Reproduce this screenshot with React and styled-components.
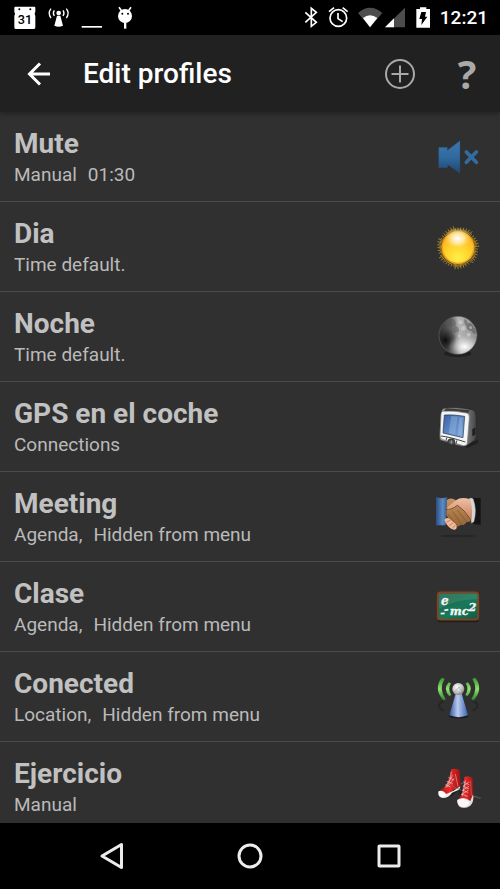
import React from 'react'
import styled, { createGlobalStyle } from 'styled-components';

const profiles = [
  { name: 'Mute', details: ['Manual', '01:30'], Icon: MuteIcon },
  { name: 'Dia', details: ['Time default.'], Icon: SunIcon },
  { name: 'Noche', details: ['Time default.'], Icon: MoonIcon },
  { name: 'GPS en el coche', details: ['Connections'], Icon: GpsIcon },
  { name: 'Meeting', details: ['Agenda,', 'Hidden from menu'], Icon: MeetingIcon },
  { name: 'Clase', details: ['Agenda,', 'Hidden from menu'], Icon: BoardIcon },
  { name: 'Conected', details: ['Location,', 'Hidden from menu'], Icon: AntennaIcon },
  { name: 'Ejercicio', details: ['Manual'], Icon: ShoesIcon },
];

function App() {
  return (
    <Screen>
      <GlobalStyle />
      <StatusBar />
      <AppBar>
        <BackButton aria-label="Back">
          <svg width="24" height="24" viewBox="0 0 24 24" fill="none" stroke="#fff" strokeWidth="3">
            <path d="M23 12H3M13 1.500L2.500 12L13 22.500" />
          </svg>
        </BackButton>
        <Title>Edit profiles</Title>
        <AddButton aria-label="Add profile">
          <svg width="32" height="32" viewBox="0 0 32 32" fill="none" stroke="#a9a9a9" strokeWidth="2">
            <circle cx="16" cy="16" r="14" />
            <path d="M16 7.500V24.500M7.500 16H24.500" />
          </svg>
        </AddButton>
        <HelpButton aria-label="Help">?</HelpButton>
      </AppBar>
      <List>
        {profiles.map(({ name, details, Icon }) =>
          <Item key={name}>
            <Row>
              <Labels>
                <Name>{name}</Name>
                <Details>
                  {details.map(text => <span key={text}>{text}</span>)}
                </Details>
              </Labels>
              <Icon />
            </Row>
          </Item>
        )}
      </List>
      <NavBar>
        <NavButton aria-label="Back">
          <svg width="26" height="28" viewBox="0 0 26 28">
            <path d="M23.500 2.500V25.500L4 14Z" />
          </svg>
        </NavButton>
        <NavButton aria-label="Home">
          <svg width="26" height="28" viewBox="0 0 26 28">
            <circle cx="13" cy="14" r="11" />
          </svg>
        </NavButton>
        <NavButton aria-label="Recent apps">
          <svg width="26" height="28" viewBox="0 0 26 28">
            <rect x="3" y="4" width="20" height="20" rx="0.500" />
          </svg>
        </NavButton>
      </NavBar>
    </Screen>
  )
}

function StatusBar() {
  return (
    <Status>
      <Notifications>
        <svg width="22" height="35" viewBox="42 0 66 105">
          <path d="M46 20h57q3 0 3 4v11q-4 6 0 12v35q0 5-4 5H47q-4 0-4-5V47q4-6 0-12V24q0-4 3-4z" />
          <circle cx="58" cy="28" r="3" fill="#000" />
          <circle cx="91" cy="28" r="3" fill="#000" />
          <CalendarDay x="75" y="73" textAnchor="middle">31</CalendarDay>
        </svg>
        <svg width="21" height="35" viewBox="144 0 63 105">
          <circle cx="176" cy="39" r="7" />
          <path d="M171 47h10l8 30q-13 6-26 0z" />
          <path d="M163 31q-6 8 0 17M189 31q6 8 0 17M153 26q-11 14 0 28M199 26q11 14 0 28" fill="none" stroke="#fff" strokeWidth="4" />
        </svg>
        <svg width="22" height="35" viewBox="243 0 66 105">
          <path d="M245 78h61v5h-61z" />
        </svg>
        <svg width="20" height="35" viewBox="345 0 60 105">
          <circle cx="375" cy="48" r="21" />
          <path d="M357 22l8 11M393 22l-8 11" stroke="#fff" strokeWidth="5" />
          <path d="M372 67h7v19h-7z" />
          <circle cx="367" cy="41" r="3" fill="#000" />
          <circle cx="384" cy="41" r="3" fill="#000" />
        </svg>
      </Notifications>
      <Indicators>
        <svg width="14" height="35" viewBox="162 0 42 105">
          <path d="M166 37l33 30l-15 12V25l15 12l-33 30" fill="none" stroke="#fff" strokeWidth="5" />
        </svg>
        <svg width="21" height="35" viewBox="231 0 63 105">
          <g fill="none" stroke="#fff" strokeWidth="5">
            <circle cx="265" cy="54" r="25" />
            <path d="M264 39v17l14 9M237 35l15-12M293 35l-15-12" />
          </g>
        </svg>
        <Network>
          <svg width="26" height="35" viewBox="321 0 78 105">
            <path d="M324 39q36-31 73 0l-37 43z" fill="#4d4d4d" />
            <path d="M339 54q21-17 43 0l-22 28z" />
          </svg>
          <svg width="22" height="35" viewBox="402 0 66 105">
            <path d="M405 82L465 23V82z" fill="#4d4d4d" />
            <path d="M405 82L432 55V82z" />
          </svg>
        </Network>
        <svg width="16" height="35" viewBox="495 0 48 105">
          <path d="M499 27h11v-5h19v5h11v56h-41z" />
          <path d="M514 36h14l-3 14h7L514 75l2-18h-8z" fill="#000" />
        </svg>
        <Clock>12:21</Clock>
      </Indicators>
    </Status>
  )
}

function MuteIcon() {
  return (
    <ProfileIcon viewBox="27 8 144 144">
      <defs>
        <linearGradient id="mute" x1="0" y1="0" x2="0" y2="1">
          <stop offset="0" stopColor="#3a78ad" />
          <stop offset="0.500" stopColor="#316aa0" />
          <stop offset="1" stopColor="#204670" />
        </linearGradient>
      </defs>
      <path d="M41 51h26v9l38-29v98L68 103v9H41z" fill="url(#mute)" stroke="#244c72" strokeWidth="1" />
      <path d="M124 65l30 31M154 65l-30 31" stroke="#336ca0" strokeWidth="11" strokeLinecap="round" />
    </ProfileIcon>
  )
}

// spikes around the disc, alternating long and short
const rays = Array.from({ length: 88 }, (_, i) => {
  const a = i * Math.PI / 44;
  const r = 53 + (i * 7) % 13;
  return `M${99 + 44 * Math.cos(a)} ${97 + 44 * Math.sin(a)}L${99 + r * Math.cos(a)} ${97 + r * Math.sin(a)}`;
}).join('');

function SunIcon() {
  return (
    <ProfileIcon viewBox="27 23 144 144">
      <defs>
        <radialGradient id="sun" cx="0.500" cy="0.850" r="0.900">
          <stop offset="0" stopColor="#fff04a" />
          <stop offset="0.450" stopColor="#ffd42c" />
          <stop offset="1" stopColor="#ffa818" />
        </radialGradient>
        <radialGradient id="sunShine">
          <stop offset="0" stopColor="#fff" />
          <stop offset="0.500" stopColor="#fff3c4" stopOpacity="0.750" />
          <stop offset="1" stopColor="#ffd75a" stopOpacity="0" />
        </radialGradient>
      </defs>
      <path d={rays} stroke="#d8a520" strokeWidth="2.200" />
      <circle cx="99" cy="97" r="49" fill="#f3a41c" />
      <circle cx="99" cy="97" r="45" fill="url(#sun)" />
      <ellipse cx="98" cy="69" rx="40" ry="32" fill="url(#sunShine)" />
    </ProfileIcon>
  )
}

function MoonIcon() {
  return (
    <ProfileIcon viewBox="27 21 144 144">
      <defs>
        <linearGradient id="moon" x1="0" y1="0.550" x2="1" y2="0.450">
          <stop offset="0" stopColor="#303030" />
          <stop offset="0.350" stopColor="#626262" />
          <stop offset="0.550" stopColor="#b4b4b4" />
          <stop offset="1" stopColor="#909090" />
        </linearGradient>
        <radialGradient id="moonLight">
          <stop offset="0" stopColor="#fff" />
          <stop offset="1" stopColor="#ddd" stopOpacity="0" />
        </radialGradient>
        <radialGradient id="moonDark">
          <stop offset="0" stopColor="#0c0c0c" />
          <stop offset="1" stopColor="#222" stopOpacity="0" />
        </radialGradient>
        <clipPath id="moonDisc"><circle cx="99" cy="88" r="57" /></clipPath>
      </defs>
      <ellipse cx="98" cy="143" rx="41" ry="10" fill="#202020" />
      <g clipPath="url(#moonDisc)">
        <circle cx="99" cy="88" r="57" fill="url(#moon)" />
        <ellipse cx="61" cy="103" rx="34" ry="38" fill="url(#moonDark)" />
        <ellipse cx="119" cy="122" rx="50" ry="34" fill="url(#moonLight)" />
        <path d="M78 37q17 3 15 21q-16 7-27-4q0-10 12-17zM90 59q16 4 12 18l-14 4q-9-10 2-22z" fill="#555" opacity="0.400" />
        <path d="M119 38q9 5 7 14q17-4 20 13q10 4 5 20q-9-2-12-10q-15-2-15-16q-9-8-5-21z" fill="#444" opacity="0.450" />
        <g fill="#d7d7d7" opacity="0.600">
          <circle cx="107" cy="49" r="6" />
          <circle cx="137" cy="65" r="4" />
          <circle cx="115" cy="67" r="7" />
          <circle cx="131" cy="86" r="6" />
          <circle cx="102" cy="90" r="4" />
        </g>
      </g>
      <circle cx="99" cy="88" r="57" fill="none" stroke="#6e6e6e" strokeWidth="1.500" />
    </ProfileIcon>
  )
}

function GpsIcon() {
  return (
    <ProfileIcon viewBox="27 21 144 144">
      <defs>
        <linearGradient id="gpsScreen" x1="0" y1="0" x2="1" y2="1">
          <stop offset="0" stopColor="#3960a5" />
          <stop offset="1" stopColor="#83acdf" />
        </linearGradient>
        <linearGradient id="gpsSide">
          <stop offset="0" stopColor="#a0a0a0" />
          <stop offset="0.800" stopColor="#6c6c6c" />
          <stop offset="1" stopColor="#444" />
        </linearGradient>
      </defs>
      <path d="M117 151l42-20v10l-32 14z" fill="#1e1e1e" />
      <path d="M55 37q40-6 87 4q10 2 11 15l1 64q0 10-9 15l-20 14q-12 5-31-1l-44-14q-8-2-7-12l5-71q1-11 7-14z" fill="url(#gpsSide)" stroke="#252525" strokeWidth="2" />
      <path d="M65 37l69 6l-6 9l-72-7z" fill="#3c3c3c" />
      <path d="M53 46q35-3 72 5q9 2 8 14l-6 76q-1 10-12 8l-61-18q-9-3-9-12l3-65q1-8 5-8z" fill="#f3f5f4" stroke="#777" strokeWidth="2" />
      <path d="M58 57q30-2 61 4l-5 64l-60-14z" fill="url(#gpsScreen)" stroke="#26334c" strokeWidth="2" />
      <path d="M79 60l19 2l-8 55l-19-5zM103 64l9 1l-3 54l-11-2z" fill="#a5c8ec" opacity="0.350" />
      <path d="M47 120q25 2 74 18M66 124l-3 9M96 133l-4 12" fill="none" stroke="#444" strokeWidth="3" />
      <ellipse cx="79" cy="138" rx="11" ry="10" fill="#454545" stroke="#252525" strokeWidth="2" />
      <path d="M73 138h12M79 132v12" stroke="#aaa" strokeWidth="2" />
      <path d="M142 99l9-5v22l-9 5z" fill="#202020" />
    </ProfileIcon>
  )
}

function MeetingIcon() {
  return (
    <ProfileIcon viewBox="27 21 144 144">
      <defs>
        <linearGradient id="sleeve">
          <stop offset="0" stopColor="#294f85" />
          <stop offset="0.600" stopColor="#5f8cc4" />
          <stop offset="1" stopColor="#315b91" />
        </linearGradient>
        <linearGradient id="skin" x1="0" y1="0" x2="0" y2="1">
          <stop offset="0" stopColor="#f0c0a2" />
          <stop offset="1" stopColor="#c97f61" />
        </linearGradient>
        <linearGradient id="darkSkin" x1="0" y1="0" x2="0" y2="1">
          <stop offset="0" stopColor="#c69561" />
          <stop offset="1" stopColor="#926334" />
        </linearGradient>
      </defs>
      <ellipse cx="98" cy="150" rx="53" ry="4" fill="#262626" />
      <path d="M33 34q17 5 34 0l-5 84H33z" fill="url(#sleeve)" />
      <path d="M140 36h27v80l-22-2q8-44-5-78z" fill="#141414" />
      <path d="M133 37q9-3 12 3q12 31 2 67l-8 5z" fill="#d5d8d2" stroke="#777" strokeWidth="1" />
      <path d="M66 42q15-10 30 4l39 22l3 33q-3 9-13 7q-6 11-18 9q-10 9-20 2l-23-31z" fill="url(#darkSkin)" />
      <path d="M93 43q15-12 42-3q10 30 4 61l-6-4q-14-18-34-38q-15 10-29 12q-7-1-2-8z" fill="url(#skin)" />
      <path d="M62 70q18 3 35-12q21 13 40 43" fill="none" stroke="#754824" strokeWidth="3" />
      <path d="M82 76l28 39M97 72l28 35M69 84l25 35" stroke="#80512b" strokeWidth="2" />
      <path d="M59 99q9-6 15-1l18 16q8 14-3 17q-13 1-27-20q-5-7-3-12z" fill="#efb99a" />
      <path d="M64 109l13-7M73 119l11-9M82 126l9-8" stroke="#ab674b" strokeWidth="2" />
    </ProfileIcon>
  )
}

function BoardIcon() {
  return (
    <ProfileIcon viewBox="27 21 144 144">
      <defs>
        <linearGradient id="board" x1="0" y1="0" x2="1" y2="1">
          <stop offset="0" stopColor="#20624c" />
          <stop offset="0.550" stopColor="#18785a" />
          <stop offset="1" stopColor="#105a45" />
        </linearGradient>
      </defs>
      <rect x="38" y="53" width="123" height="86" rx="8" fill="#1e1e1e" />
      <rect x="38" y="49" width="122" height="82" rx="9" fill="url(#board)" stroke="#8c401c" strokeWidth="5" />
      <path d="M42 53h115v17q-62 0-115 28z" fill="#83b9a1" opacity="0.200" />
      <Chalk x="48" y="87" $size={36}>e</Chalk>
      <path d="M58 103l12-2M47 113l12-1" stroke="#f3f8f4" strokeWidth="5" />
      <Chalk x="74" y="118" $size={34}>mc<tspan dy="-12">2</tspan></Chalk>
    </ProfileIcon>
  )
}

function AntennaIcon() {
  return (
    <ProfileIcon viewBox="27 23 144 144">
      <defs>
        <linearGradient id="mast">
          <stop offset="0" stopColor="#3353a0" />
          <stop offset="0.450" stopColor="#b8cdf2" />
          <stop offset="1" stopColor="#3c5fac" />
        </linearGradient>
        <radialGradient id="ball" cx="0.400" cy="0.350" r="0.700">
          <stop offset="0" stopColor="#fff" />
          <stop offset="0.600" stopColor="#c4c4c4" />
          <stop offset="1" stopColor="#777" />
        </radialGradient>
        <linearGradient id="wave" x1="0" y1="0" x2="0" y2="1">
          <stop offset="0" stopColor="#32942b" />
          <stop offset="0.500" stopColor="#8fe26f" />
          <stop offset="1" stopColor="#297e24" />
        </linearGradient>
      </defs>
      <ellipse cx="101" cy="152" rx="30" ry="7" fill="#1c1c1c" />
      <path d="M57 106q-30 16 0 30M143 106q30 16 0 30" fill="none" stroke="#252525" strokeWidth="6" />
      <path d="M92 85h18l19 65q-28 11-56 0z" fill="url(#mast)" />
      <circle cx="100" cy="71" r="18" fill="url(#ball)" />
      <path d="M90 79l12-14l8 11" fill="none" stroke="#888" strokeWidth="3" opacity="0.500" />
      <path d="M50 37q-26 34 6 69l6-5q-22-31-3-61zM151 37q26 34-6 69l-6-5q22-31 3-61zM71 51q-18 20 2 42l6-5q-12-17-1-34zM129 51q18 20-2 42l-6-5q12-17 1-34z" fill="url(#wave)" />
    </ProfileIcon>
  )
}

function ShoesIcon() {
  return (
    <ProfileIcon viewBox="27 23 144 144">
      <defs>
        <linearGradient id="canvas">
          <stop offset="0" stopColor="#a91417" />
          <stop offset="0.500" stopColor="#e92b29" />
          <stop offset="1" stopColor="#9d1114" />
        </linearGradient>
      </defs>
      <path d="M48 121q25 16 50-15l10 17q-12 13-7 27q15 12 32 2l14-22l-9-37z" fill="#191919" opacity="0.600" />
      <path d="M79 42q12-4 24 2l3 29q4 14-2 23l-20 8q-10 24-30 22q-12 0-14-10q3-12 17-19q13-13 22-55z" fill="url(#canvas)" />
      <path d="M41 108q12-5 23 8l22-10l20-13q0 7-6 11l-19 8q-10 16-27 16q-14-1-14-14z" fill="#ededed" />
      <path d="M41 108q12-5 22 11q-8 8-19 3q-4-5-3-14z" fill="#fff" />
      <path d="M79 49q-2 33-18 48M70 66l16 8M65 78l18 7M61 88l16 7M83 60l-21 34M88 69l-22 27" fill="none" stroke="#dcc8c8" strokeWidth="2" />
      <path d="M91 56l8 37" stroke="#e9a2a0" strokeWidth="2" />
      <path d="M118 65q13-5 25 3l1 33q4 18-2 33q-8 24-26 23q-21-1-19-19q8-13 14-24q5-18 7-49z" fill="url(#canvas)" />
      <path d="M97 133q20-12 39 4l8-20q4 16-4 29q-9 13-25 11q-19-1-18-24z" fill="#dedede" />
      <path d="M97 135q19-11 37 4q-3 15-17 16q-20 0-20-20z" fill="#f8f8f8" />
      <path d="M115 79l18 10M114 92l18 9M112 104l18 8M108 116l20 7M133 80l-19 13M132 93l-21 13M130 105l-21 13M121 75l-9 48" fill="none" stroke="#dcc8c8" strokeWidth="2" />
      <path d="M143 124q12-2 18 4h6M78 86q15 16 22 14l9 5M108 86l10-5" fill="none" stroke="#808080" strokeWidth="2" />
      <path d="M137 76l2 45" stroke="#d86663" strokeWidth="2" />
    </ProfileIcon>
  )
}

const GlobalStyle = createGlobalStyle`
  * {
    box-sizing: border-box;
  }
  body {
    margin: 0;
    background-color: #000;
    font-family: Roboto, sans-serif;
  }
  svg {
    display: block;
    flex-shrink: 0;
    overflow: visible;
  }
`;

const Screen = styled.div`
  height: 100vh;
  display: flex;
  flex-direction: column;
  background-color: #303030;
`;

const Status = styled.div`
  display: flex;
  justify-content: space-between;
  height: 35px;
  padding: 0 12px 0 14px;
  background-color: #000;
  fill: #fff;
  color: #fff;
`;

const Notifications = styled.div`
  display: flex;
  gap: 12px;
`;

const Indicators = styled.div`
  display: flex;
  gap: 9px;
`;

const Network = styled.div`
  display: flex;
  gap: 1px;
`;

const Clock = styled.time`
  font-size: 19px;
  font-weight: 500;
  line-height: 36px;
`;

const CalendarDay = styled.text`
  fill: #000;
  font-size: 38px;
  font-weight: 500;
`;

const AppBar = styled.header`
  display: flex;
  align-items: center;
  height: 77px;
  padding: 0 13px 0 27px;
  background-color: #212121;
  box-shadow: 0 1px 5px rgba(0, 0, 0, 0.4);
  z-index: 1;
`;

const IconButton = styled.button`
  display: flex;
  align-items: center;
  justify-content: center;
  padding: 0;
  border: none;
  background-color: transparent;
  color: #a9a9a9;
`;

const BackButton = styled(IconButton)`
  margin-right: 32px;
`;

const AddButton = styled(IconButton)`
  width: 48px;
`;

const HelpButton = styled(IconButton)`
  width: 40px;
  margin-left: 23px;
  font-family: 'Open Sans', sans-serif;
  font-size: 39px;
  font-weight: bold;
  line-height: 48px;
`;

const Title = styled.h1`
  flex: 1;
  margin: 0;
  color: #fff;
  font-size: 28px;
  font-weight: 500;
  line-height: 36px;
`;

const List = styled.ul`
  flex: 1;
  min-height: 0;
  margin: 0;
  padding: 0;
  overflow: hidden;
  list-style: none;
`;

const Item = styled.li`
  border-bottom: 1px solid #4a4a4a;
`;

const Row = styled.button`
  display: flex;
  align-items: center;
  justify-content: space-between;
  width: 100%;
  height: 89px;
  padding: 0 18px 0 14px;
  border: none;
  background-color: transparent;
  font-family: inherit;
  text-align: left;
`;

const Labels = styled.span`
  display: flex;
  flex-direction: column;
`;

const Name = styled.span`
  color: #c1c1c1;
  font-size: 28px;
  font-weight: bold;
  line-height: 36px;
`;

const Details = styled.span`
  display: flex;
  gap: 11px;
  color: #bababa;
  font-size: 19px;
  line-height: 26px;
`;

const ProfileIcon = styled.svg.attrs({ 'aria-hidden': true })`
  width: 48px;
  height: 48px;
`;

const Chalk = styled.text`
  fill: #f3f8f4;
  stroke: #f3f8f4;
  font-family: 'DejaVu Serif', serif;
  font-size: ${props => props.$size}px;
  font-style: italic;
  font-weight: bold;
`;

const NavBar = styled.nav`
  display: flex;
  height: 66px;
  padding: 0 41px;
  background-color: #000;
`;

const NavButton = styled(IconButton)`
  flex: 1;
  & svg {
    fill: none;
    stroke: #ececec;
    stroke-width: 3;
    stroke-linejoin: round;
  }
`;

export default App
